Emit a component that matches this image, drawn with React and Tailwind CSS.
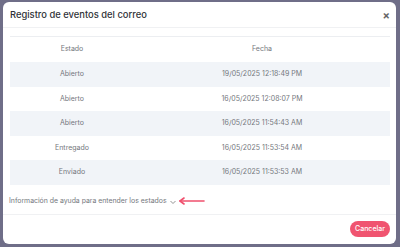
const rows = [
  { estado: "Abierto", fecha: "19/05/2025 12:18:49 PM" },
  { estado: "Abierto", fecha: "16/05/2025 12:08:07 PM" },
  { estado: "Abierto", fecha: "16/05/2025 11:54:43 AM" },
  { estado: "Entregado", fecha: "16/05/2025 11:53:54 AM" },
  { estado: "Enviado", fecha: "16/05/2025 11:53:53 AM" },
];

export default function App() {
  return (
    <div className="w-[400px] h-[247px] overflow-hidden bg-[#6f6e88] font-['Inter',sans-serif]">
      <div className="ml-[3px] mt-[2px] w-[393px] h-[242px] bg-white rounded-[6px] flex flex-col">
        <div className="h-[26px] pl-[7px] pr-[6px] pt-[1px] flex items-center justify-between border-b border-[#f0f1f3]">
          <span className="text-[9.4px] font-medium text-[#2f3237]">Registro de eventos del correo</span>
          <span className="text-[11px] font-bold text-[#666] leading-none">×</span>
        </div>
        <div className="pl-[7px] pr-[6px] pt-[8px]">
          <div className="border-t border-[#eceef1]">
            <div className="grid grid-cols-[124px_1fr] h-[25px] items-center text-[7px] text-[#74777d]">
              <div className="text-center">Estado</div>
              <div className="text-center">Fecha</div>
            </div>
            {rows.map((r, i) => (
              <div
                key={i}
                className={`grid grid-cols-[124px_1fr] h-[24.6px] items-center text-[7px] text-[#74777d] ${i % 2 === 0 ? "bg-[#f1f4f8]" : "bg-white"}`}
              >
                <div className="text-center">{r.estado}</div>
                <div className="text-center">{r.fecha}</div>
              </div>
            ))}
          </div>
        </div>
        <div className="h-[30px] pl-[6px] pt-[4px] flex items-center border-b border-[#f0f1f3] text-[6.9px] text-[#74777d]">
          <span>Información de ayuda para entender los estados</span>
          <svg width="8" height="8" viewBox="0 0 8 8" className="ml-[2px] mt-[1px]" fill="none" stroke="#888" strokeWidth="0.9">
            <path d="M1.5 3 L4 5.5 L6.5 3" />
          </svg>
          <svg width="27" height="8" viewBox="0 0 27 8" className="ml-[1px]" fill="none" stroke="#f0506e" strokeWidth="1.6" strokeLinecap="round" strokeLinejoin="round">
            <path d="M2 4 H26" />
            <path d="M6 1 L2 4 L6 7" />
          </svg>
        </div>
        <div className="flex-1 flex items-center justify-end pr-[6px]">
          <button className="h-[16px] w-[40px] rounded-full bg-[#f05470] text-white text-[7px] font-medium">Cancelar</button>
        </div>
      </div>
    </div>
  );
}
